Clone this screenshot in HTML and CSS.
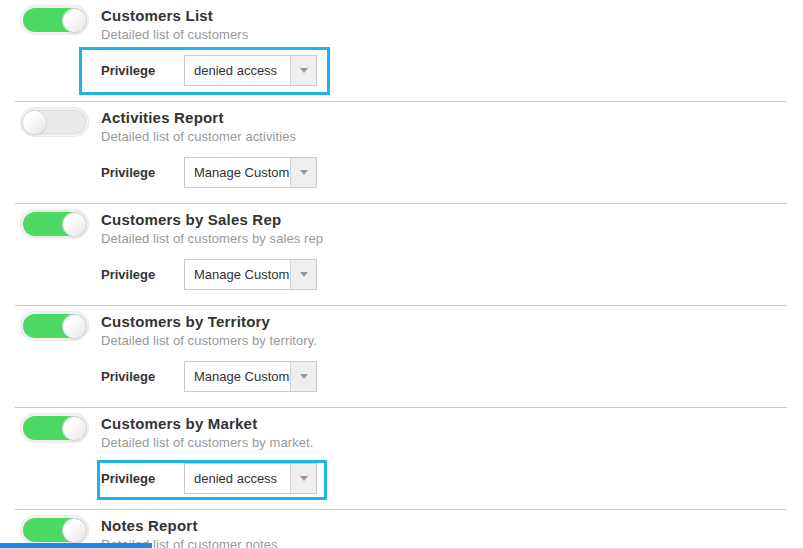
FILE: index.html
```html
<!DOCTYPE html>
<html lang="en">
  <head>
    <meta charset="UTF-8" />
    <meta name="viewport" content="width=device-width, initial-scale=1.0" />
    <title>Report Privileges</title>
    <link rel="stylesheet" href="styles.css">
  </head>
  <body>
    <!-- Report list -->
    <div class="report-list">
      <div class="report">
        <div class="toggle on"><span class="knob"></span></div>
        <div class="report-info">
          <div class="report-title">Customers List</div>
          <div class="report-desc">Detailed list of customers</div>
          <div class="privilege">
            <span class="highlight hl-first"></span>
            <span class="privilege-label">Privilege</span>
            <div class="select">
              <span class="select-value">denied access</span>
              <span class="select-arrow"></span>
            </div>
          </div>
        </div>
      </div>

      <div class="report">
        <div class="toggle"><span class="knob"></span></div>
        <div class="report-info">
          <div class="report-title">Activities Report</div>
          <div class="report-desc">Detailed list of customer activities</div>
          <div class="privilege">
            <span class="privilege-label">Privilege</span>
            <div class="select">
              <span class="select-value">Manage Customers</span>
              <span class="select-arrow"></span>
            </div>
          </div>
        </div>
      </div>

      <div class="report">
        <div class="toggle on"><span class="knob"></span></div>
        <div class="report-info">
          <div class="report-title">Customers by Sales Rep</div>
          <div class="report-desc">Detailed list of customers by sales rep</div>
          <div class="privilege">
            <span class="privilege-label">Privilege</span>
            <div class="select">
              <span class="select-value">Manage Customers</span>
              <span class="select-arrow"></span>
            </div>
          </div>
        </div>
      </div>

      <div class="report">
        <div class="toggle on"><span class="knob"></span></div>
        <div class="report-info">
          <div class="report-title">Customers by Territory</div>
          <div class="report-desc">Detailed list of customers by territory.</div>
          <div class="privilege">
            <span class="privilege-label">Privilege</span>
            <div class="select">
              <span class="select-value">Manage Customers</span>
              <span class="select-arrow"></span>
            </div>
          </div>
        </div>
      </div>

      <div class="report">
        <div class="toggle on"><span class="knob"></span></div>
        <div class="report-info">
          <div class="report-title">Customers by Market</div>
          <div class="report-desc">Detailed list of customers by market.</div>
          <div class="privilege">
            <span class="highlight hl-second"></span>
            <span class="privilege-label">Privilege</span>
            <div class="select">
              <span class="select-value">denied access</span>
              <span class="select-arrow"></span>
            </div>
          </div>
        </div>
      </div>

      <div class="report">
        <div class="toggle on"><span class="knob"></span></div>
        <div class="report-info">
          <div class="report-title">Notes Report</div>
          <div class="report-desc">Detailed list of customer notes</div>
          <div class="privilege">
            <span class="privilege-label">Privilege</span>
            <div class="select">
              <span class="select-value">Manage Customers</span>
              <span class="select-arrow"></span>
            </div>
          </div>
        </div>
      </div>
    </div>

    <!-- Bottom bar -->
    <div class="bottom-bar"><span class="progress"></span></div>
  </body>
</html>
```

FILE: styles.css
```css
body {
  font-family: "Liberation Sans", Arial, sans-serif;
  margin: 0;
  padding: 0;
  background: #fff;
  color: #333;
  overflow: hidden;
}

/* Report rows */
.report-list {
  margin: 0 16px 0 15px;
}

.report {
  display: flex;
  gap: 12px;
  padding: 6px 0 15px 5px;
  border-bottom: 1px solid #cccccc;
}

.report-title {
  font-size: 15px;
  font-weight: bold;
  line-height: 20px;
  letter-spacing: 0.2px;
  color: #333;
}

.report-desc {
  font-size: 13px;
  line-height: 17px;
  letter-spacing: 0.08px;
  color: #999;
}

/* Toggle switch */
.toggle {
  flex: none;
  position: relative;
  width: 69px;
  height: 30px;
  margin-top: -1px;
  border-radius: 15px;
  background: #f1f1f1;
  box-shadow: inset 0 0 0 1px #ebebeb;
}

.toggle::before {
  content: "";
  position: absolute;
  top: 3px;
  left: 3px;
  right: 3px;
  bottom: 3px;
  border-radius: 12px;
  background: #e9e9e9;
  box-shadow: inset 0 0 0 1px #dcdcdc;
}

.toggle.on::before {
  background: #4cd964;
  box-shadow: none;
}

.knob {
  position: absolute;
  top: 4px;
  left: 3px;
  width: 23px;
  height: 23px;
  border-radius: 50%;
  background: linear-gradient(135deg, #ffffff 30%, #e4e4e4);
  box-shadow: 0 0 0 1px #d6d6d6, 0 1px 2px rgba(0, 0, 0, 0.15);
}

.toggle.on .knob {
  left: auto;
  right: 3px;
}

/* Privilege select */
.privilege {
  position: relative;
  display: inline-flex;
  align-items: center;
  margin-top: 12px;
}

.privilege-label {
  width: 83px;
  font-size: 13px;
  font-weight: bold;
  color: #333;
}

.select {
  display: flex;
  width: 133px;
  height: 31px;
  box-sizing: border-box;
  border: 1px solid #cccccc;
  background: #fff;
}

.select-value {
  flex: 1;
  overflow: hidden;
  white-space: nowrap;
  padding-left: 9px;
  font-size: 13px;
  line-height: 29px;
  color: #333;
}

.select-arrow {
  position: relative;
  flex: none;
  width: 25px;
  border-left: 1px solid #d4d4d4;
  background: #eeeeee;
}

.select-arrow::after {
  content: "";
  position: absolute;
  top: 12px;
  left: 9px;
  border-left: 4px solid transparent;
  border-right: 4px solid transparent;
  border-top: 5px solid #999;
}

/* Annotation boxes */
.highlight {
  position: absolute;
  border: 3px solid #1db4ea;
  pointer-events: none;
}

.hl-first {
  top: -8px;
  bottom: -9px;
  left: -22px;
  right: -13px;
}

.hl-second {
  top: -3px;
  bottom: -6px;
  left: -4px;
  right: -10px;
}

/* Bottom bar */
.bottom-bar {
  position: fixed;
  left: 0;
  right: 0;
  bottom: 0;
  height: 5px;
  border-bottom: 1px solid #dddddd;
}

.progress {
  display: block;
  width: 152px;
  height: 5px;
  background: #1e88e5;
}
```
